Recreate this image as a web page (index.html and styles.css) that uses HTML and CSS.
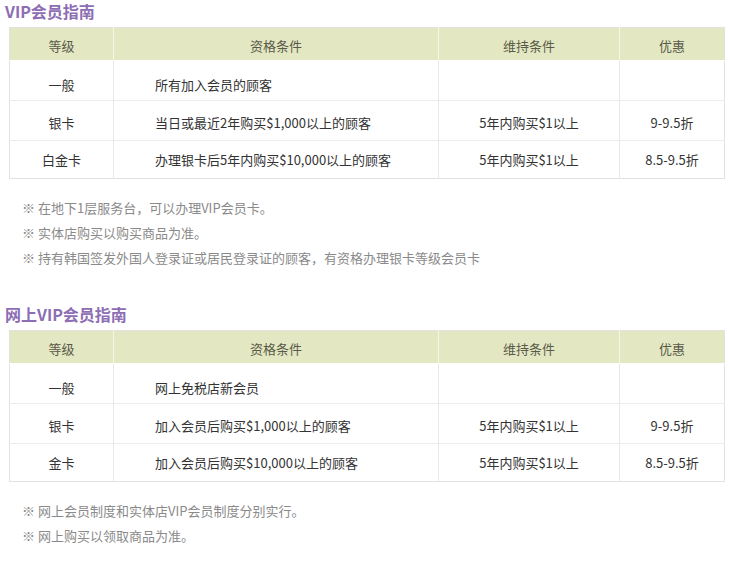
FILE: index.html
```html
<!DOCTYPE html>
<html lang="zh">
<head>
<meta charset="utf-8">
<title>VIP会员指南</title>
<link rel="stylesheet" href="styles.css">
</head>
<body>
<div class="page">
  <h2 class="title">VIP会员指南</h2>
  <table class="grid">
    <colgroup><col class="c-level"><col class="c-qual"><col class="c-keep"><col class="c-disc"></colgroup>
    <thead>
      <tr class="head"><th>等级</th><th>资格条件</th><th>维持条件</th><th>优惠</th></tr>
    </thead>
    <tbody>
      <tr class="r1"><td>一般</td><td class="qual">所有加入会员的顾客</td><td></td><td></td></tr>
      <tr class="r2"><td>银卡</td><td class="qual">当日或最近2年购买$1,000以上的顾客</td><td>5年内购买$1以上</td><td>9-9.5折</td></tr>
      <tr class="r3"><td>白金卡</td><td class="qual">办理银卡后5年内购买$10,000以上的顾客</td><td>5年内购买$1以上</td><td>8.5-9.5折</td></tr>
    </tbody>
  </table>
  <ul class="notes">
    <li>※ 在地下1层服务台，可以办理VIP会员卡。</li>
    <li>※ 实体店购买以购买商品为准。</li>
    <li>※ 持有韩国签发外国人登录证或居民登录证的顾客，有资格办理银卡等级会员卡</li>
  </ul>

  <h2 class="title second">网上VIP会员指南</h2>
  <table class="grid">
    <colgroup><col class="c-level"><col class="c-qual"><col class="c-keep"><col class="c-disc"></colgroup>
    <thead>
      <tr class="head"><th>等级</th><th>资格条件</th><th>维持条件</th><th>优惠</th></tr>
    </thead>
    <tbody>
      <tr class="r1"><td>一般</td><td class="qual">网上免税店新会员</td><td></td><td></td></tr>
      <tr class="r2"><td>银卡</td><td class="qual">加入会员后购买$1,000以上的顾客</td><td>5年内购买$1以上</td><td>9-9.5折</td></tr>
      <tr class="r3"><td>金卡</td><td class="qual">加入会员后购买$10,000以上的顾客</td><td>5年内购买$1以上</td><td>8.5-9.5折</td></tr>
    </tbody>
  </table>
  <ul class="notes">
    <li>※ 网上会员制度和实体店VIP会员制度分别实行。</li>
    <li>※ 网上购买以领取商品为准。</li>
  </ul>
</div>
</body>
</html>
```

FILE: styles.css
```css
html, body {
  margin: 0;
  padding: 0;
  background: #ffffff;
}

body {
  font-family: "Noto Sans CJK SC", "DejaVu Sans", sans-serif;
  font-size: 13px;
  color: #333333;
}

.page {
  padding: 1px 0 0 5px;
}

.title {
  margin: 0;
  font-size: 16px;
  line-height: 20px;
  font-weight: bold;
  color: #8d6db3;
}

.title.second {
  margin-top: 34px;
}

.grid {
  margin: 6px 0 0 4px;
  width: 715px;
  table-layout: fixed;
  border-collapse: collapse;
  border: 1px solid #e2e2e2;
}

.c-level { width: 104px; }
.c-qual { width: 325px; }
.c-keep { width: 181px; }
.c-disc { width: 105px; }

.grid th,
.grid td {
  padding: 0;
  text-align: center;
  vertical-align: middle;
  font-weight: normal;
  line-height: 16px;
}

.grid th {
  height: 29px;
  padding-top: 3px;
  background: #e3e8c2;
  color: #5a5a4a;
  border-left: 1px solid #f4f6e6;
}

.grid td {
  border-left: 1px solid #e8e8e8;
  border-top: 1px solid #ececec;
  color: #333333;
}

.grid th:first-child,
.grid td:first-child {
  border-left: none;
}

.grid td.qual {
  text-align: left;
  padding-left: 41px;
}

.grid .r1 td {
  height: 31px;
  padding-top: 8px;
  border-top: 1px solid #ffffff;
}

.grid .r2 td {
  height: 35px;
  padding-top: 4px;
}

.grid .r3 td {
  height: 37px;
}

.notes {
  list-style: none;
  margin: 16px 0 0 17px;
  padding: 0;
  color: #8a8a8a;
  line-height: 25px;
}
```
